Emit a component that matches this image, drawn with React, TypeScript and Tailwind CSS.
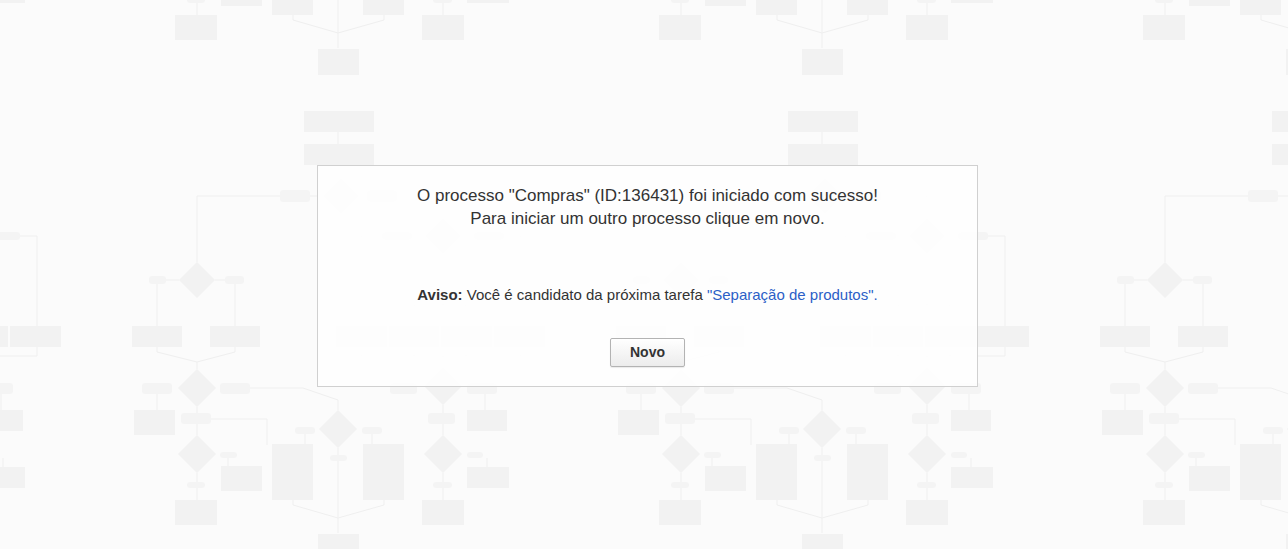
import React from "react";

type Box = [number, number, number, number];
type Pt = [number, number];

// flowchart shapes of one background tile (484 x 485)
const boxes: Box[] = [
  [318, 49, 41, 26],
  [304, 111, 70, 21],
  [304, 144, 70, 21],
  [272, 444, 41, 56],
  [363, 444, 41, 56],
  [132, 326, 50, 21],
  [210, 326, 50, 21],
  [134, 410, 41, 25],
  [221, 466, 41, 25],
  [175, 500, 42, 25],
  [336, 326, 51, 21],
  [389, 326, 50, 21],
  [441, 326, 51, 21],
  [494, 326, 51, 21],
  [422, 500, 42, 25],
  [467, 410, 40, 21],
  [467, 467, 42, 21],
];

const labels: Box[] = [
  [280, 190, 30, 12],
  [367, 190, 30, 12],
  [149, 276, 17, 8],
  [225, 276, 19, 8],
  [142, 383, 30, 11],
  [220, 383, 30, 11],
  [181, 413, 30, 11],
  [220, 452, 17, 6],
  [187, 482, 18, 6],
  [295, 427, 20, 7],
  [362, 427, 20, 7],
  [330, 455, 17, 6],
  [382, 232, 30, 8],
  [474, 232, 30, 8],
  [390, 383, 27, 11],
  [467, 383, 30, 11],
  [428, 413, 27, 11],
  [467, 452, 16, 6],
  [433, 482, 19, 6],
];

const diamonds: [number, number, number][] = [
  [341, 196, 18],
  [197, 280, 18],
  [197, 388, 19],
  [197, 454, 19],
  [338, 429, 19],
  [443, 236, 18],
  [443, 386, 19],
  [443, 454, 19],
];

const lines: Pt[][] = [
  [[293, 500], [293, 505], [338, 518]],
  [[384, 500], [384, 505], [338, 518]],
  [[338, 461], [338, 533]],
  [[338, 448], [338, 455]],
  [[338, 132], [338, 144]],
  [[339, 165], [339, 178]],
  [[310, 196], [323, 196]],
  [[359, 196], [367, 196]],
  [[280, 196], [197, 196], [197, 262]],
  [[397, 196], [443, 196], [443, 218]],
  [[166, 280], [179, 280]],
  [[215, 280], [225, 280]],
  [[157, 284], [157, 326]],
  [[235, 284], [235, 326]],
  [[157, 347], [157, 352], [197, 362]],
  [[235, 347], [235, 352], [197, 362]],
  [[197, 362], [197, 369]],
  [[157, 394], [157, 410]],
  [[197, 407], [197, 413]],
  [[197, 424], [197, 435]],
  [[211, 419], [267, 419], [267, 445]],
  [[228, 458], [228, 466]],
  [[197, 473], [197, 482]],
  [[197, 488], [197, 500]],
  [[250, 388], [303, 388], [338, 400], [338, 410]],
  [[305, 434], [305, 444]],
  [[372, 434], [372, 444]],
  [[474, 236], [521, 236], [521, 326]],
  [[412, 236], [361, 236], [361, 326]],
  [[443, 254], [443, 305]],
  [[414, 305], [466, 305]],
  [[414, 305], [414, 326]],
  [[466, 305], [466, 326]],
  [[361, 347], [361, 356], [521, 356]],
  [[414, 347], [414, 356]],
  [[466, 347], [466, 356]],
  [[521, 347], [521, 356]],
  [[443, 356], [443, 367]],
  [[485, 394], [485, 410]],
  [[443, 405], [443, 413]],
  [[443, 424], [443, 435]],
  [[487, 458], [487, 467]],
  [[443, 473], [443, 482]],
  [[443, 488], [443, 500]],
];

function FlowTile() {
  return (
    <g>
      {lines.map((pts, i) => (
        <polyline
          key={"l" + i}
          points={pts.map((p) => p.join(",")).join(" ")}
          fill="none"
          stroke="#efefef"
          strokeWidth={1}
        />
      ))}
      {boxes.map(([x, y, w, h], i) => (
        <rect key={"b" + i} x={x} y={y} width={w} height={h} fill="#f2f2f2" />
      ))}
      {labels.map(([x, y, w, h], i) => (
        <rect key={"t" + i} x={x} y={y} width={w} height={h} rx={3} fill="#f4f4f4" />
      ))}
      {diamonds.map(([cx, cy, r], i) => (
        <polygon
          key={"d" + i}
          points={`${cx},${cy - r} ${cx + r},${cy} ${cx},${cy + r} ${cx - r},${cy}`}
          fill="#f2f2f2"
        />
      ))}
    </g>
  );
}

function Background() {
  const tiles: [number, number][] = [];
  for (let k = -1; k <= 2; k++) for (let m = -1; m <= 1; m++) tiles.push([k, m]);
  return (
    <svg className="absolute inset-0 h-full w-full" aria-hidden="true">
      {tiles.map(([k, m]) => (
        <g key={`${k}-${m}`} transform={`translate(${k * 484} ${m * 485})`}>
          <FlowTile />
        </g>
      ))}
    </svg>
  );
}

export default function App() {
  return (
    <div className="relative h-[549px] overflow-hidden bg-[#fbfbfb] font-['Liberation_Sans',Arial,sans-serif] text-[#333]">
      <Background />
      <div className="relative flex justify-center pl-[7px] pt-[165px]">
        <div className="flex w-[661px] flex-col items-center border border-[#d0d0d0] bg-white/85 pb-[19px] pt-[18px]">
          <p className="text-center text-[17px] leading-[23px]">
            O processo "Compras" (ID:136431) foi iniciado com sucesso!
            <br />
            Para iniciar um outro processo clique em novo.
          </p>
          <p className="mt-[55px] text-center text-[15px] leading-[20px]">
            <b>Aviso:</b> Você é candidato da próxima tarefa{" "}
            <a href="#" className="text-[#2c5fc7]">
              "Separação de produtos".
            </a>
          </p>
          <button className="mt-[33px] h-[29px] w-[75px] rounded-[2px] border border-[#b3b3b3] bg-gradient-to-b from-white to-[#ececec] text-[14px] font-bold text-[#333] shadow-[0_1px_1px_rgba(0,0,0,0.08)]">
            Novo
          </button>
        </div>
      </div>
    </div>
  );
}
